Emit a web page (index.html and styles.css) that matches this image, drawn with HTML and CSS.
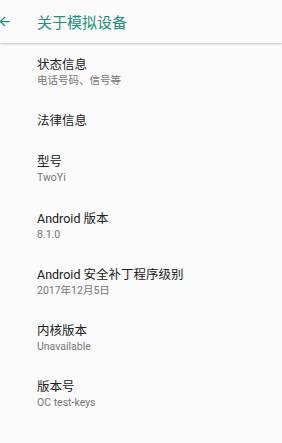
FILE: index.html
```html
<!DOCTYPE html>
<html lang="zh-CN">
<head>
  <meta charset="UTF-8">
  <meta name="viewport" content="width=device-width, initial-scale=1.0">
  <title>关于模拟设备</title>
  <link rel="stylesheet" href="styles.css">
</head>
<body>
  <div class="toolbar">
    <svg class="back-icon" viewBox="0 0 24 24" width="15" height="15">
      <path d="M20 11H7.83l5.59-5.59L12 4l-8 8 8 8 1.41-1.41L7.83 13H20v-2z" fill="#20907f"/>
    </svg>
    <div class="toolbar-title">关于模拟设备</div>
  </div>

  <div class="list">
    <div class="item">
      <div class="item-title">状态信息</div>
      <div class="item-sub">电话号码、信号等</div>
    </div>
    <div class="item">
      <div class="item-title">法律信息</div>
    </div>
    <div class="item">
      <div class="item-title">型号</div>
      <div class="item-sub">TwoYi</div>
    </div>
    <div class="item">
      <div class="item-title">Android 版本</div>
      <div class="item-sub">8.1.0</div>
    </div>
    <div class="item">
      <div class="item-title">Android 安全补丁程序级别</div>
      <div class="item-sub">2017年12月5日</div>
    </div>
    <div class="item">
      <div class="item-title">内核版本</div>
      <div class="item-sub">Unavailable</div>
    </div>
    <div class="item">
      <div class="item-title">版本号</div>
      <div class="item-sub">OC test-keys</div>
    </div>
  </div>
</body>
</html>
```

FILE: styles.css
```css
body {
  margin: 0;
  background-color: #fafafa;
  font-family: Roboto, "Noto Sans CJK SC", sans-serif;
  overflow: hidden;
}
.toolbar {
  height: 43px;
  display: flex;
  align-items: center;
  background-color: #fafafa;
  box-shadow: 0 1px 2px rgba(0, 0, 0, 0.22);
  position: relative;
}
.back-icon {
  margin-left: -3.5px;
  display: block;
}
.toolbar-title {
  margin-left: 25.5px;
  font-size: 15px;
  color: #20907f;
  padding-bottom: 1px;
}
.list {
  padding-top: 1px;
}
.item {
  padding: 12px 0 12px 37px;
}
.item-title {
  font-size: 12.5px;
  line-height: 17px;
  color: #222;
}
.item-sub {
  font-size: 10.5px;
  line-height: 15.25px;
  color: #777;
}
```
